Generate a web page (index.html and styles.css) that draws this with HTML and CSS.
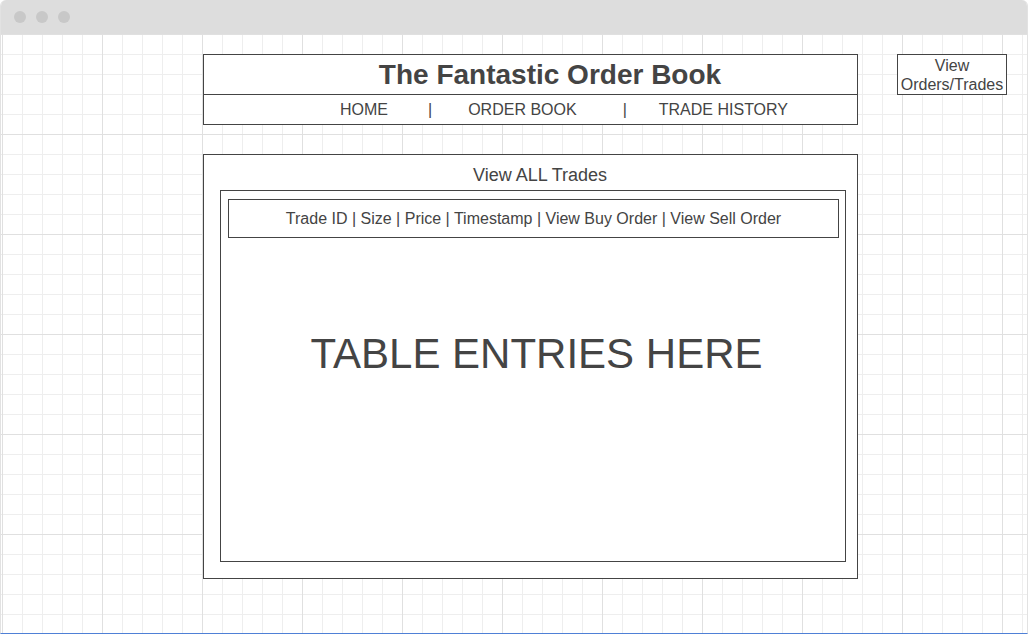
FILE: index.html
```html
<!DOCTYPE html>
<html lang="en">
<head>
    <meta charset="UTF-8">
    <meta name="viewport" content="width=device-width, initial-scale=1.0">
    <title>The Fantastic Order Book</title>
    <link rel="stylesheet" href="styles.css">
</head>
<body>
<div class="window">
    <div class="titlebar">
        <span class="dot"></span>
        <span class="dot"></span>
        <span class="dot"></span>
    </div>
    <div class="canvas">
        <div class="layout">
            <div class="main-col">
                <div class="header-box">
                    <h1 class="site-title">The Fantastic Order Book</h1>
                    <nav class="nav">
                        <a href="#">HOME</a>
                        <span class="sep sep-1">|</span>
                        <a href="#">ORDER BOOK</a>
                        <span class="sep sep-2">|</span>
                        <a href="#">TRADE HISTORY</a>
                    </nav>
                </div>

                <div class="trades-box">
                    <div class="trades-title">View ALL Trades</div>
                    <div class="table-box">
                        <div class="table-head">Trade ID | Size | Price | Timestamp | View Buy Order | View Sell Order</div>
                        <div class="entries">TABLE ENTRIES HERE</div>
                    </div>
                </div>
            </div>

            <a class="side-btn" href="#">View Orders/Trades</a>
        </div>
    </div>
</div>
</body>
</html>
```

FILE: styles.css
```css
body {
    margin: 0;
    padding: 0;
    background: #fff;
    font-family: 'Liberation Sans', Arial, sans-serif;
    color: #444;
}
.window {
    width: 1028px;
    height: 634px;
    box-sizing: border-box;
    border-left: 1px solid #e2e2e2;
    border-right: 1px solid #e2e2e2;
    border-bottom: 1px solid #4f80d6;
    border-radius: 6px 6px 0 0;
    overflow: hidden;
    display: flex;
    flex-direction: column;
}
.titlebar {
    height: 34px;
    flex-shrink: 0;
    background: #dddddd;
    display: flex;
    align-items: center;
    gap: 10px;
    padding-left: 13px;
}
.dot {
    width: 12px;
    height: 12px;
    border-radius: 50%;
    background: #c8c8c8;
}
.canvas {
    flex: 1;
    background-color: #fff;
    background-image:
        linear-gradient(to right, #e0e0e0 1px, transparent 1px),
        linear-gradient(to bottom, #e0e0e0 1px, transparent 1px),
        linear-gradient(to right, #eeeeee 1px, transparent 1px),
        linear-gradient(to bottom, #eeeeee 1px, transparent 1px);
    background-size: 100px 100px, 100px 100px, 20px 20px, 20px 20px;
    background-position: 1px 0;
}
.layout {
    display: flex;
    align-items: flex-start;
    padding: 20px 0 0 202px;
}
.main-col {
    width: 655px;
}
.header-box {
    border: 1px solid #444;
    background: #fff;
}
.site-title {
    margin: 0;
    height: 39px;
    line-height: 39px;
    padding-left: 39px;
    text-align: center;
    font-size: 28px;
    font-weight: bold;
    border-bottom: 1px solid #444;
}
.nav {
    height: 29px;
    display: flex;
    align-items: center;
    padding-left: 136px;
    font-size: 16px;
}
.nav a {
    color: #444;
    text-decoration: none;
}
.sep-1 {
    margin: 0 36px 0 40px;
}
.sep-2 {
    margin: 0 32px 0 46px;
}
.trades-box {
    margin-top: 29px;
    border: 1px solid #444;
    background: #fff;
}
.trades-title {
    padding: 8px 0 3px 19px;
    line-height: 24px;
    text-align: center;
    font-size: 18px;
}
.table-box {
    margin: 0 11px 16px 16px;
    height: 370px;
    border: 1px solid #444;
}
.table-head {
    margin: 8px 6px 0 7px;
    height: 37px;
    line-height: 37px;
    border: 1px solid #444;
    text-align: center;
    font-size: 16px;
}
.entries {
    padding: 92px 0 0 7px;
    line-height: 48px;
    text-align: center;
    font-size: 42px;
}
.side-btn {
    margin-left: 39px;
    width: 108px;
    height: 38px;
    padding-top: 1px;
    border: 1px solid #444;
    background: #fff;
    display: flex;
    align-items: center;
    justify-content: center;
    text-align: center;
    font-size: 16px;
    line-height: 19px;
    color: #444;
    text-decoration: none;
}
```
